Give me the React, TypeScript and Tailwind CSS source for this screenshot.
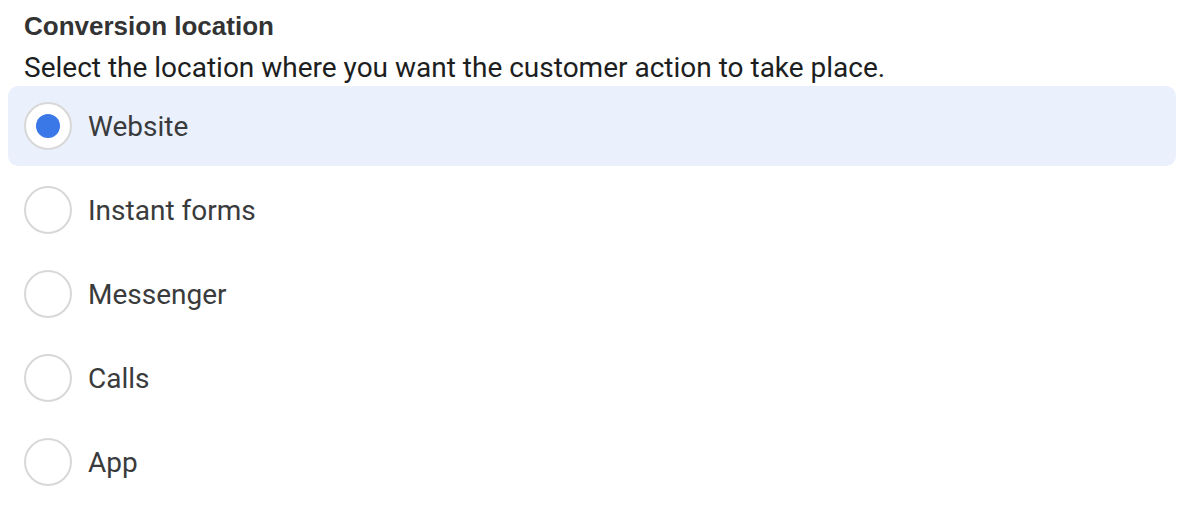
const options = ['Website', 'Instant forms', 'Messenger', 'Calls', 'App']

function Radio({ checked }: { checked: boolean }) {
  return (
    <span className="flex h-[48px] w-[48px] shrink-0 items-center justify-center rounded-full border-2 border-[#d8d8d8] bg-white">
      {checked && <span className="h-[24px] w-[24px] rounded-full bg-[#3b78e7]" />}
    </span>
  )
}

export default function App() {
  const selected = 'Website'
  return (
    <div className="min-h-[524px] bg-white pl-[8px] pr-[14px] pt-[10px] font-['Roboto',Arial,sans-serif] text-[#1c1e21]">
      <div className="px-[16px]">
        <h2 className="font-['Liberation_Sans',Arial,sans-serif] text-[26px] font-bold leading-[32px] text-[#333333]">
          Conversion location
        </h2>
        <p className="mt-[10px] text-[28px] leading-[32px] text-[#1c1e21]">
          Select the location where you want the customer action to take place.
        </p>
      </div>
      <div className="mt-[2px] flex flex-col gap-[4px]">
        {options.map((o) => (
          <label
            key={o}
            className={`flex h-[80px] items-center gap-[16px] rounded-[10px] px-[16px] ${
              o === selected ? 'bg-[#eaf0fc]' : ''
            }`}
          >
            <Radio checked={o === selected} />
            <span className="pt-[1px] text-[28px] text-[#3a3b3c]">{o}</span>
          </label>
        ))}
      </div>
    </div>
  )
}
